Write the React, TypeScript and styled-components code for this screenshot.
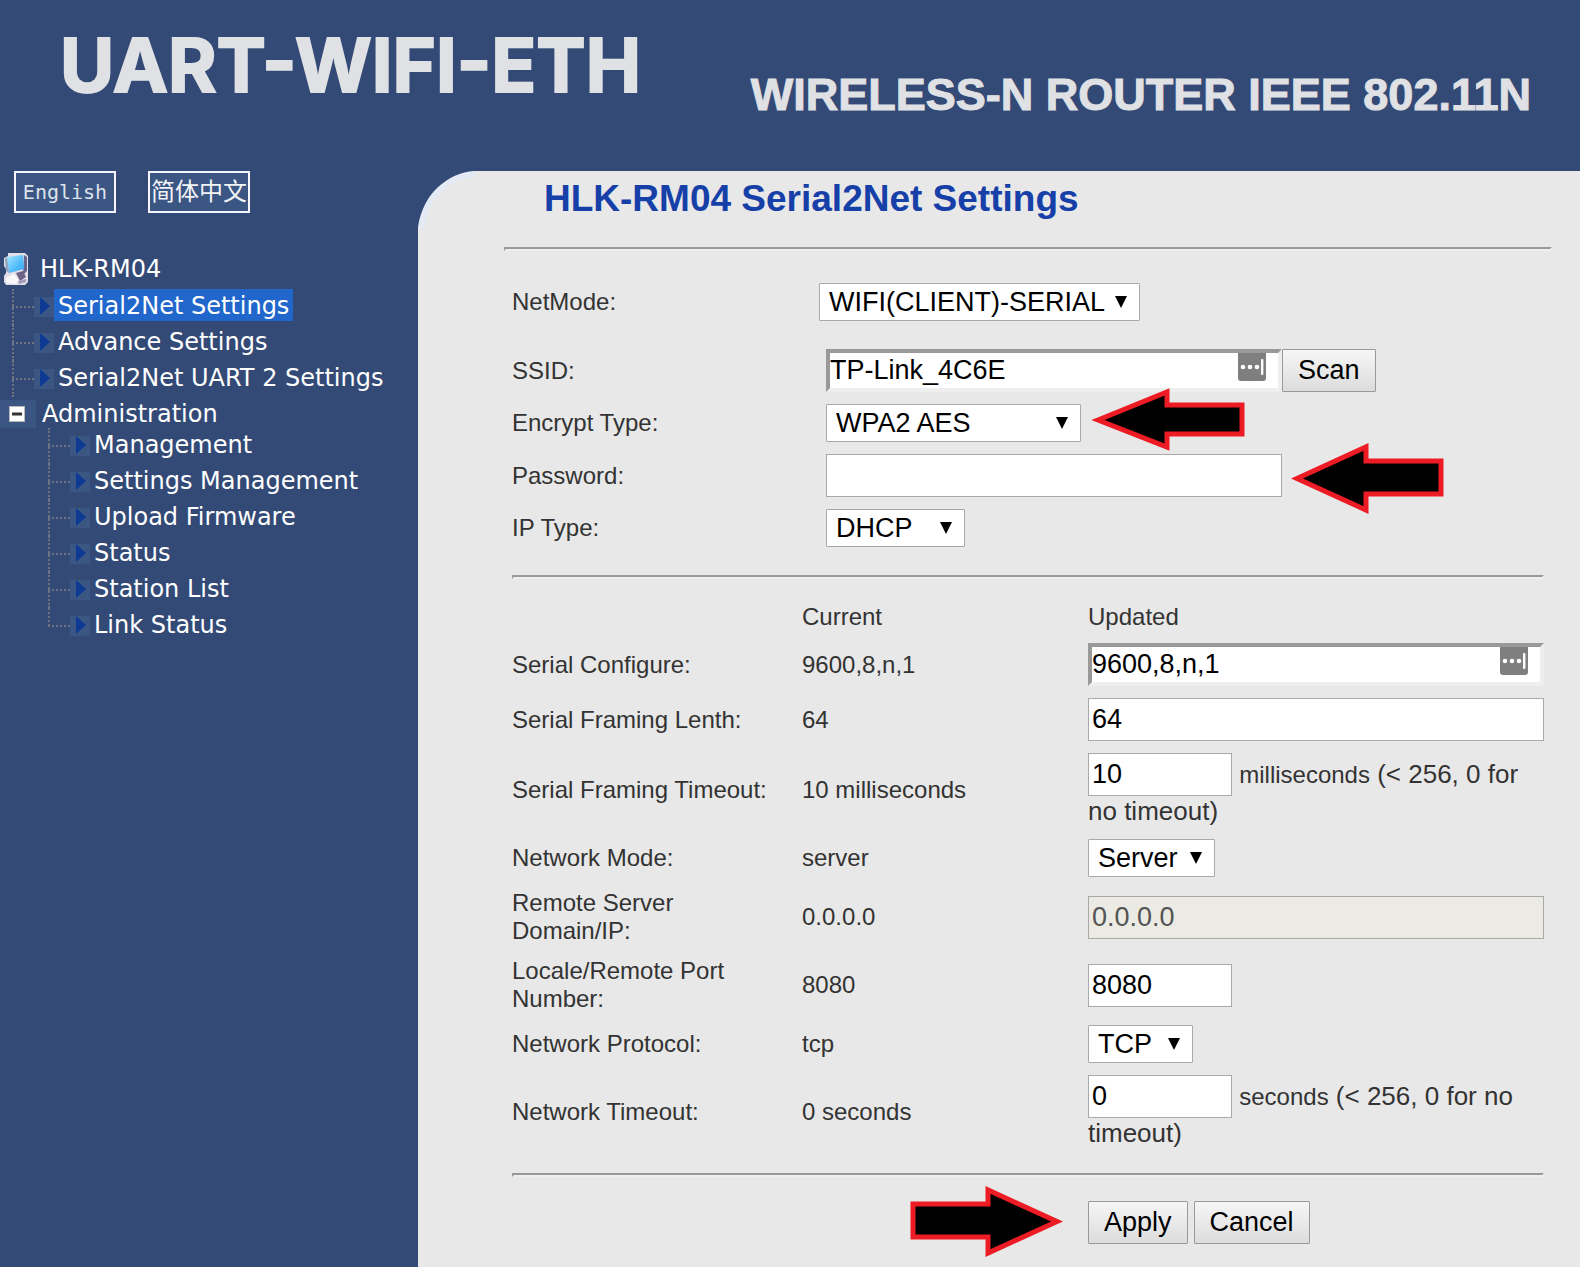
import React from "react";
import styled, { createGlobalStyle } from "styled-components";

const SANS = '"Liberation Sans", Arial, Helvetica, sans-serif';
const MENU = '"DejaVu Sans", Verdana, sans-serif';
const NAVY = "#334a76";
const TILE = "#3b5683";

const GlobalStyle = createGlobalStyle`
  *, *::before, *::after { box-sizing: border-box; }
  body { margin: 0; background: ${NAVY}; font-family: ${SANS}; }
`;

const Page = styled.div`
  display: flex;
  flex-direction: column;
  min-height: 100vh;
`;

const Banner = styled.header`
  display: flex;
  justify-content: space-between;
  align-items: flex-start;
  height: 171px;
  padding: 20px 49px 0 60px;
  color: #e0e1e4;
  white-space: nowrap;
`;

const Brand = styled.div`
  font: 700 74px/90px Inter, ${SANS};
  -webkit-text-stroke: 2px #e0e1e4;
`;

const Tagline = styled.div`
  padding-top: 49px;
  font: 700 45px/52px ${SANS};
  -webkit-text-stroke: 1px #e0e1e4;
`;

const Body = styled.div`
  display: grid;
  grid-template-columns: 418px minmax(0, 1fr);
  flex: 1;
`;

const Sidebar = styled.nav`
  font: 24px/32px ${MENU};
  color: #fff;
`;

const Languages = styled.div`
  display: flex;
  gap: 32px;
  padding: 0 14px;
  margin-bottom: 36px;
`;

const LanguageButton = styled.button<{ $cjk?: boolean }>`
  width: 102px;
  height: 42px;
  padding: 0;
  border: 2px solid #f4f6fa;
  background: ${TILE};
  color: ${(p) => (p.$cjk ? "#f2f4f8" : "#dde3ec")};
  font: ${(p) =>
    p.$cjk
      ? '24px/38px "Liberation Sans", "Noto Sans CJK SC", sans-serif'
      : '20px/38px "DejaVu Sans Mono", "Liberation Mono", monospace'};
`;

const RootRow = styled.div`
  display: flex;
  align-items: center;
  gap: 11px;
  height: 40px;
  padding-left: 4px;
  line-height: 34px;
`;

const FolderRow = styled.div`
  display: flex;
  align-items: center;
  gap: 6px;
  height: 28px;
  margin-top: 3px;
`;

const FolderToggle = styled.button`
  display: flex;
  align-items: center;
  width: 36px;
  height: 28px;
  padding: 0 0 0 9px;
  border: 0;
  background: ${TILE};
`;

const Tree = styled.ul<{ $indent: number }>`
  margin: 0;
  padding: 0 0 0 ${(p) => p.$indent}px;
  list-style: none;
`;

const TreeItem = styled.li<{ $last?: boolean }>`
  position: relative;
  display: flex;
  align-items: center;
  height: 36px;

  &::before {
    content: "";
    position: absolute;
    left: 0;
    top: 0;
    height: ${(p) => (p.$last ? "18px" : "36px")};
    border-left: 2px dotted #6f7482;
  }
  &::after {
    content: "";
    order: -1;
    width: 22px;
    border-top: 2px dotted #6f7482;
  }
`;

const ArrowTile = styled.svg`
  flex: none;
  width: 20px;
  height: 20px;
  background: ${TILE};
`;

const TreeLink = styled.a<{ $active?: boolean }>`
  align-self: flex-start;
  height: 32px;
  padding: 0 4px;
  color: #fff;
  line-height: 34px;
  text-decoration: none;
  white-space: nowrap;
  background: ${(p) => (p.$active ? "#2166cb" : "transparent")};
`;

const Panel = styled.main`
  position: relative;
  padding: 0 28px 23px 86px;
  background: #e8e8e8;
  color: #333;
  font-size: 24px;
  line-height: 28px;
`;

const Corner = styled.svg`
  position: absolute;
  left: 0;
  top: 0;
`;

const Title = styled.h1`
  margin: 0 0 21px;
  padding: 7px 0 6px 40px;
  color: #1640a8;
  font: 700 37px/42px ${SANS};
`;

const Rule = styled.hr`
  height: 4px;
  margin: 0;
  border: 2px solid;
  border-color: #999 #eee #eee #999;
`;

const Form = styled.form`
  padding: 0 8px;
`;

const Fields = styled.div`
  display: grid;
  gap: 12px;
  padding: 28px 0;
`;

const Field = styled.div<{ $label?: number }>`
  display: grid;
  grid-template-columns: ${(p) => p.$label ?? 314}px minmax(0, 1fr);
  align-items: center;
`;

const ModeField = styled(Field)`
  padding-top: 32px;
`;

const Cluster = styled.div`
  display: flex;
`;

const Anchor = styled.div<{ $width?: number }>`
  position: relative;
  width: ${(p) => (p.$width ? `${p.$width}px` : "100%")};
  max-width: 100%;
`;

const TextInput = styled.input<{ $short?: boolean; $sunken?: boolean }>`
  width: ${(p) => (p.$short ? "144px" : "100%")};
  height: 43px;
  margin: 0;
  padding: ${(p) => (p.$sunken ? "0" : "0 3px")};
  border: ${(p) => (p.$sunken ? "4px" : "1px")} solid #a9a9a9;
  border-color: ${(p) => (p.$sunken ? "#999 #eee #eee #999" : "#a9a9a9")};
  border-radius: 0;
  background: #fff;
  color: #000;
  font: 27px/31px ${SANS};
  vertical-align: ${(p) => (p.$short ? "baseline" : "top")};

  &:disabled {
    background: #ebebe4;
    color: #545454;
  }
`;

const Badge = styled.svg`
  position: absolute;
  right: 16px;
  top: 4px;
`;

const SelectBox = styled.div<{ $width: number }>`
  position: relative;
  width: ${(p) => p.$width}px;
  max-width: 100%;
  height: 38px;
`;

const Select = styled.select`
  appearance: none;
  width: 100%;
  height: 38px;
  margin: 0;
  padding: 0 24px 0 9px;
  border: 1px solid #a9a9a9;
  border-radius: 1px;
  background: #fff;
  color: #000;
  font: 27px/34px ${SANS};
`;

const Caret = styled.svg`
  position: absolute;
  right: 13px;
  top: 13px;
  pointer-events: none;
`;

const Button = styled.button`
  height: 43px;
  padding: 0 15px 2px;
  border: 1px solid #999;
  border-radius: 1px;
  background: linear-gradient(#f6f6f6, #dcdcdc);
  color: #000;
  font: 27px/38px ${SANS};
`;

const Table = styled.table`
  width: 100%;
  margin: 18px 0;
  border-collapse: collapse;
  table-layout: fixed;

  th, td {
    padding: 6px 0;
    text-align: left;
    font-weight: 400;
    vertical-align: middle;
  }
`;

const LabelCol = styled.col`
  width: 290px;
`;

const CurrentCol = styled.col`
  width: 286px;
`;

const RowLabel = styled.label`
  display: block;
  padding-right: 26px;
`;

const Hinted = styled.div`
  font-size: 26px;
  line-height: 31px;
`;

const Unit = styled.span`
  font-size: 24px;
`;

const Actions = styled.div`
  position: relative;
  display: flex;
  gap: 6px;
  margin: 24px 0 0 576px;
`;

const Pointer = styled.svg<{ $side: "left" | "right"; $gap: number; $top: number }>`
  position: absolute;
  top: ${(p) => p.$top}px;
  ${(p) => (p.$side === "right" ? "left" : "right")}: calc(100% + ${(p) => p.$gap}px);
  overflow: visible;
  fill: #000;
  stroke: #ed1c24;
  stroke-width: 5;
  stroke-linejoin: miter;
`;

const Dropdown = ({ id, width, value }: { id: string; width: number; value: string }) => (
  <SelectBox $width={width}>
    <Select id={id} defaultValue={value}>
      <option>{value}</option>
    </Select>
    <Caret width="12" height="12" viewBox="0 0 12 12">
      <path d="M0 0h12L6 12z" />
    </Caret>
  </SelectBox>
);

const FillBadge = () => (
  <Badge width="28" height="28" viewBox="0 0 28 28">
    <path d="M0 0h28v25q0 3-3 3H3q-3 0-3-3z" fill="#7f7f7f" />
    <g fill="#fff">
      <circle cx="5" cy="14" r="2.3" />
      <circle cx="12" cy="14" r="2.3" />
      <circle cx="19" cy="14" r="2.3" />
      <rect x="23" y="6" width="2.4" height="16" rx="1" />
    </g>
  </Badge>
);

const ComputerIcon = () => (
  <svg width="25" height="32" viewBox="0 0 25 32">
    <defs>
      <linearGradient id="screen" x1="0" y1="0" x2="1" y2="1">
        <stop offset="0" stopColor="#a5e8ff" />
        <stop offset="0.600" stopColor="#52bdfb" />
        <stop offset="1" stopColor="#3aa0f0" />
      </linearGradient>
    </defs>
    <path d="M4 0h17l3 3v26l-3 3H2l-2-3v-6l2-3V16l-2-3V5l4-2z" fill="#e2dfe8" />
    <path d="M20 2l3 2v14l-4 4z" fill="#66648f" />
    <path d="M3 4l16-2 1 14-15 4z" fill="url(#screen)" />
    <path d="M1 6l2-2 2 16-3-2z" fill="#8ea3bd" />
    <path d="M12 20l7-2 3 6-6 4z" fill="#6d6389" />
    <path d="M2 25l8-4 5 6-3 4-9-1z" fill="#f8f7fa" />
    <path d="M14 28l8-2v3l-7 2z" fill="#a39dbb" />
  </svg>
);

const MenuArrow = () => (
  <ArrowTile viewBox="0 0 20 20">
    <path d="M6 0l10 9L6 18z" fill="#0d3a92" />
  </ArrowTile>
);

const Branch = ({ items, indent, open, active }: { items: string[]; indent: number; open?: boolean; active?: string }) => (
  <Tree $indent={indent}>
    {items.map((item, i) => (
      <TreeItem key={item} $last={!open && i === items.length - 1}>
        <MenuArrow />
        <TreeLink href="#" $active={item === active}>
          {item}
        </TreeLink>
      </TreeItem>
    ))}
  </Tree>
);

type Setting = { id: string; label: string; current: string; control: React.ReactNode };

const settings: Setting[] = [
  {
    id: "serial",
    label: "Serial Configure:",
    current: "9600,8,n,1",
    control: (
      <Anchor>
        <TextInput id="serial" $sunken defaultValue="9600,8,n,1" />
        <FillBadge />
      </Anchor>
    ),
  },
  { id: "length", label: "Serial Framing Lenth:", current: "64", control: <TextInput id="length" defaultValue="64" /> },
  {
    id: "framing",
    label: "Serial Framing Timeout:",
    current: "10 milliseconds",
    control: (
      <Hinted>
        <TextInput id="framing" $short defaultValue="10" /> <Unit>milliseconds</Unit> (&lt; 256, 0 for no timeout)
      </Hinted>
    ),
  },
  { id: "mode", label: "Network Mode:", current: "server", control: <Dropdown id="mode" width={127} value="Server" /> },
  {
    id: "remote",
    label: "Remote Server Domain/IP:",
    current: "0.0.0.0",
    control: <TextInput id="remote" disabled defaultValue="0.0.0.0" />,
  },
  {
    id: "port",
    label: "Locale/Remote Port Number:",
    current: "8080",
    control: <TextInput id="port" $short defaultValue="8080" />,
  },
  { id: "protocol", label: "Network Protocol:", current: "tcp", control: <Dropdown id="protocol" width={105} value="TCP" /> },
  {
    id: "timeout",
    label: "Network Timeout:",
    current: "0 seconds",
    control: (
      <Hinted>
        <TextInput id="timeout" $short defaultValue="0" /> <Unit>seconds</Unit> (&lt; 256, 0 for no timeout)
      </Hinted>
    ),
  },
];

export default function App() {
  return (
    <Page>
      <GlobalStyle />
      <Banner>
        <Brand>UART-WIFI-ETH</Brand>
        <Tagline>WIRELESS-N ROUTER IEEE 802.11N</Tagline>
      </Banner>
      <Body>
        <Sidebar>
          <Languages>
            <LanguageButton>English</LanguageButton>
            <LanguageButton $cjk lang="zh-CN">
              简体中文
            </LanguageButton>
          </Languages>
          <RootRow>
            <ComputerIcon />
            HLK-RM04
          </RootRow>
          <Branch
            indent={12}
            open
            active="Serial2Net Settings"
            items={["Serial2Net Settings", "Advance Settings", "Serial2Net UART 2 Settings"]}
          />
          <FolderRow>
            <FolderToggle aria-label="Collapse">
              <svg width="16" height="16" viewBox="0 0 16 16">
                <rect x="0.500" y="0.500" width="15" height="15" fill="#fff" stroke="#b9b9b9" />
                <rect x="3" y="6.500" width="10" height="3" fill="#333" />
              </svg>
            </FolderToggle>
            Administration
          </FolderRow>
          <Branch
            indent={48}
            items={["Management", "Settings Management", "Upload Firmware", "Status", "Station List", "Link Status"]}
          />
        </Sidebar>
        <Panel>
          <Corner width="58" height="60" viewBox="0 0 58 60">
            <path d="M0 0h56C30 2 5 22 0 56z" fill={NAVY} stroke="#e4eaf5" strokeWidth="12" />
            <path d="M0 0h56C30 2 5 22 0 56z" fill={NAVY} />
          </Corner>
          <Title>HLK-RM04 Serial2Net Settings</Title>
          <Rule />
          <Form onSubmit={(e) => e.preventDefault()}>
            <ModeField $label={307}>
              <label htmlFor="netmode">NetMode:</label>
              <Dropdown id="netmode" width={321} value="WIFI(CLIENT)-SERIAL" />
            </ModeField>
            <Fields>
              <Field>
                <label htmlFor="ssid">SSID:</label>
                <Cluster>
                  <Anchor $width={456}>
                    <TextInput id="ssid" $sunken defaultValue="TP-Link_4C6E" />
                    <FillBadge />
                  </Anchor>
                  <Button type="button">Scan</Button>
                </Cluster>
              </Field>
              <Field>
                <label htmlFor="encrypt">Encrypt Type:</label>
                <Anchor $width={255}>
                  <Dropdown id="encrypt" width={255} value="WPA2 AES" />
                  <Pointer $side="right" $gap={11} $top={-16} width="152" height="63" viewBox="0 0 152 63">
                    <path d="M6 32L75 4v13h75v29H75v13z" />
                  </Pointer>
                </Anchor>
              </Field>
              <Field>
                <label htmlFor="password">Password:</label>
                <Anchor $width={456}>
                  <TextInput id="password" type="password" />
                  <Pointer $side="right" $gap={9} $top={-11} width="152" height="71" viewBox="0 0 152 71">
                    <path d="M6 35.500L75 4v14h75v33H75v16z" />
                  </Pointer>
                </Anchor>
              </Field>
              <Field>
                <label htmlFor="iptype">IP Type:</label>
                <Dropdown id="iptype" width={139} value="DHCP" />
              </Field>
            </Fields>
            <Rule />
            <Table>
              <colgroup>
                <LabelCol />
                <CurrentCol />
                <col />
              </colgroup>
              <thead>
                <tr>
                  <td />
                  <th scope="col">Current</th>
                  <th scope="col">Updated</th>
                </tr>
              </thead>
              <tbody>
                {settings.map((s) => (
                  <tr key={s.id}>
                    <th scope="row">
                      <RowLabel htmlFor={s.id}>{s.label}</RowLabel>
                    </th>
                    <td>{s.current}</td>
                    <td>{s.control}</td>
                  </tr>
                ))}
              </tbody>
            </Table>
            <Rule />
            <Actions>
              <Pointer $side="left" $gap={25} $top={-15} width="152" height="71" viewBox="0 0 152 71">
                <path d="M146 35.500L77 4v14H2v33h75v16z" />
              </Pointer>
              <Button type="submit">Apply</Button>
              <Button type="reset">Cancel</Button>
            </Actions>
          </Form>
        </Panel>
      </Body>
    </Page>
  );
}
